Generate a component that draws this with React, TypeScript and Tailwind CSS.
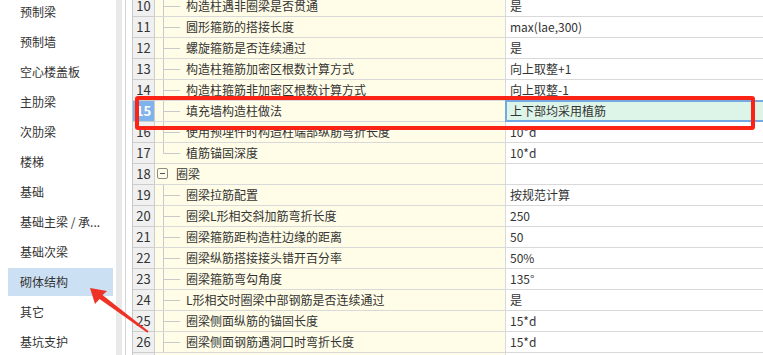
import React from 'react';

type Row = { no: number; name: string; value?: string; group?: boolean; last?: boolean };

const navItems = [
  '预制梁',
  '预制墙',
  '空心楼盖板',
  '主肋梁',
  '次肋梁',
  '楼梯',
  '基础',
  '基础主梁 / 承...',
  '基础次梁',
  '砌体结构',
  '其它',
  '基坑支护',
];

const rows: Row[] = [
  { no: 10, name: '构造柱遇非圈梁是否贯通', value: '是' },
  { no: 11, name: '圆形箍筋的搭接长度', value: 'max(lae,300)' },
  { no: 12, name: '螺旋箍筋是否连续通过', value: '是' },
  { no: 13, name: '构造柱箍筋加密区根数计算方式', value: '向上取整+1' },
  { no: 14, name: '构造柱箍筋非加密区根数计算方式', value: '向上取整-1' },
  { no: 15, name: '填充墙构造柱做法', value: '上下部均采用植筋' },
  { no: 16, name: '使用预埋件时构造柱端部纵筋弯折长度', value: '10*d' },
  { no: 17, name: '植筋锚固深度', value: '10*d', last: true },
  { no: 18, name: '圈梁', group: true },
  { no: 19, name: '圈梁拉筋配置', value: '按规范计算' },
  { no: 20, name: '圈梁L形相交斜加筋弯折长度', value: '250' },
  { no: 21, name: '圈梁箍筋距构造柱边缘的距离', value: '50' },
  { no: 22, name: '圈梁纵筋搭接接头错开百分率', value: '50%' },
  { no: 23, name: '圈梁箍筋弯勾角度', value: '135°' },
  { no: 24, name: 'L形相交时圈梁中部钢筋是否连续通过', value: '是' },
  { no: 25, name: '圈梁侧面纵筋的锚固长度', value: '15*d' },
  { no: 26, name: '圈梁侧面钢筋遇洞口时弯折长度', value: '15*d' },
  { no: 27, name: '', value: '' },
];

const SELECTED = 15;

function TreeLines({ last }: { last?: boolean }) {
  return (
    <svg width="31" height="20" className="shrink-0">
      <line x1="8.5" y1="0" x2="8.5" y2={last ? 10.5 : 20} stroke="#c9c9c9" />
      <line x1="8.5" y1="10.5" x2="25" y2="10.5" stroke="#c9c9c9" />
    </svg>
  );
}

function Collapse() {
  return (
    <svg width="21" height="20" className="shrink-0">
      <rect x="2.5" y="4.5" width="10" height="10" rx="1.5" fill="#fffde7" stroke="#8c8c8c" />
      <line x1="5" y1="9.5" x2="10" y2="9.5" stroke="#555" />
    </svg>
  );
}

export default function App() {
  return (
    <div className="relative flex h-[355px] w-[763px] overflow-hidden bg-white font-['Noto_Sans_CJK_SC',sans-serif] text-[12px] text-[#333]">
      {/* category list */}
      <aside className="w-[116px] shrink-0 bg-white">
        <ul className="-mt-[2px] flex flex-col gap-[2px] pl-[8px] pr-[3px]">
          {navItems.map((item, i) => (
            <li
              key={item}
              className={`flex h-[28px] items-center whitespace-nowrap pl-[12px] ${i === 9 ? 'bg-[#cce0f4]' : ''}`}
            >
              {item}
            </li>
          ))}
        </ul>
      </aside>

      {/* splitter */}
      <div className="w-[6px] shrink-0 bg-[#e9e9e9]" />
      <div className="w-[3px] shrink-0" />
      <div className="w-[1px] shrink-0 bg-[#d6d6d6]" />
      <div className="w-[6px] shrink-0" />

      {/* property grid */}
      <div className="-mt-[4px] flex min-w-0 flex-1 flex-col border-l border-[#c8c8c8]">
        {rows.map((r) => {
          const sel = r.no === SELECTED;
          return (
            <div key={r.no} className="flex h-[21px] shrink-0">
              <div
                className={`flex w-[22px] shrink-0 items-center justify-center border-r border-b border-[#cdcdcd] text-[13px] ${
                  sel ? 'bg-[#7fb3ec] font-bold text-white' : 'bg-[#f0f0f0] text-[#333]'
                }`}
              >
                {r.no}
              </div>
              <div className="flex w-[351px] shrink-0 items-center border-r border-b border-[#d9d9d9] bg-[#fffde7] whitespace-nowrap">
                {r.group ? <Collapse /> : r.no <= 26 ? <TreeLines last={r.last} /> : null}
                <span>{r.name}</span>
              </div>
              <div className="relative flex min-w-0 flex-1 items-center border-b border-[#d9d9d9] bg-white pl-[4px] whitespace-nowrap">
                {sel && (
                  <div className="absolute -top-[1px] -bottom-[1px] -left-[1px] -right-[10px] border-2 border-[#72a9e2] bg-[#ddf5e8]" />
                )}
                <span className="relative">{r.value}</span>
              </div>
            </div>
          );
        })}
      </div>

      {/* red annotation box */}
      <div className="pointer-events-none absolute left-[135px] top-[96px] h-[34px] w-[620px] rounded-[3px] border-[4px] border-[#fb2216]" />

      {/* red annotation arrow */}
      <svg
        className="pointer-events-none absolute left-[86px] top-[284px]"
        width="66"
        height="52"
        viewBox="0 0 66 52"
      >
        <polygon
          points="4,4 21,7 16.5,11 62.6,47.2 61.4,48.8 13.5,15 9,20"
          fill="#ee3326"
        />
      </svg>
    </div>
  );
}
